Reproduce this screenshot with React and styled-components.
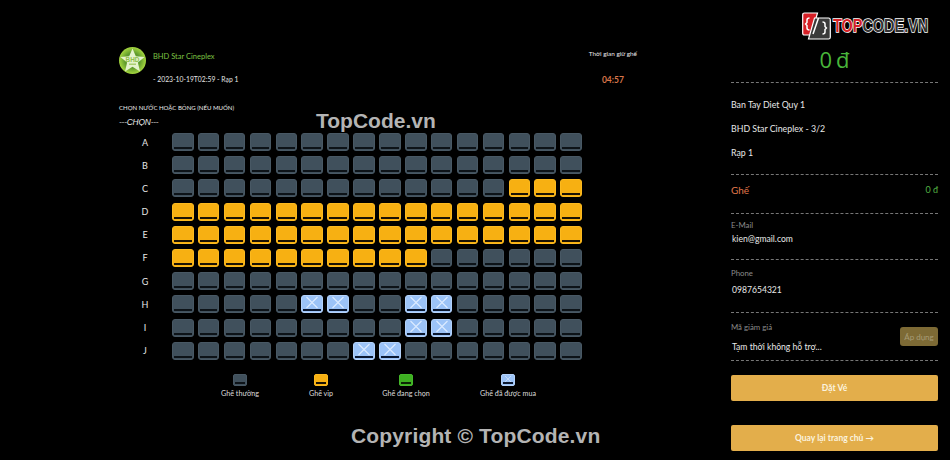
import React from "react";
import styled, { createGlobalStyle } from "styled-components";

const GlobalStyle = createGlobalStyle`
  html, body {
    margin: 0;
    padding: 0;
    background: #000;
    overflow: hidden;
  }
  body {
    font-family: "Lato", "Noto Sans", sans-serif;
    color: #e8e8e8;
  }
`;

const SEAT_COLORS = {
  normal: { bg: "#40505c", edge: "#485864", bar: "#0d1318" },
  vip: { bg: "#f7b012", edge: "#fbb91f", bar: "#1a1204" },
  picked: { bg: "#3eb022", edge: "#45b82a", bar: "#0b2605" },
  sold: { bg: "#9cc3f7", edge: "#b4d2fa", bar: "#0b1830" },
};

const Page = styled.div`
  position: relative;
  width: 950px;
  height: 460px;
  display: flex;
  background: #000;
  overflow: hidden;
`;

const Main = styled.main`
  width: 731px;
  padding: 47px 0 0 119px;
  box-sizing: border-box;
`;

const Header = styled.header`
  display: flex;
  justify-content: space-between;
  width: 518px;
  height: 53px;
`;

const Cinema = styled.div`
  display: flex;
  gap: 7px;
`;

const CinemaText = styled.div`
  display: flex;
  flex-direction: column;
  gap: 14px;
  padding-top: 5px;
`;

const CinemaName = styled.div`
  font-size: 7.5px;
  line-height: 9px;
  color: #7cc242;
`;

const CinemaInfo = styled.div`
  font-size: 6.8px;
  line-height: 9px;
  color: #e4e4e4;
`;

const Hold = styled.div`
  display: flex;
  flex-direction: column;
  align-items: center;
  gap: 17px;
  padding-top: 2px;
`;

const HoldLabel = styled.div`
  font-size: 6.4px;
  line-height: 9px;
  color: #ececec;
`;

const Countdown = styled.div`
  font-size: 8.5px;
  line-height: 10px;
  font-weight: 700;
  color: #d9764a;
`;

const ComboLabel = styled.div`
  margin-top: 3px;
  font-size: 6.05px;
  line-height: 9px;
  color: #ececec;
`;

const ComboSelect = styled.div`
  margin-top: 5px;
  font-family: "Liberation Sans", sans-serif;
  font-size: 8.4px;
  line-height: 10px;
  font-style: italic;
  letter-spacing: -0.2px;
  color: #e8e8e8;
`;

const SeatGrid = styled.div`
  margin-top: 6px;
  display: flex;
  flex-direction: column;
  gap: 5.2px;
`;

const SeatRow = styled.div`
  display: flex;
  align-items: center;
`;

const RowLabel = styled.div`
  width: 53px;
  padding-right: 1px;
  box-sizing: border-box;
  text-align: center;
  font-size: 9px;
  color: #e6e6e6;
`;

const Seats = styled.div`
  display: flex;
  gap: 4.4px;
`;

const SeatBox = styled.div`
  position: relative;
  width: ${(p) => (p.$small ? 14 : 21.5)}px;
  height: ${(p) => (p.$small ? 12 : 18)}px;
  box-sizing: border-box;
  border-radius: ${(p) => (p.$small ? 2 : 3)}px;
  background: ${(p) => SEAT_COLORS[p.$kind].bg};
  border: 1px solid ${(p) => SEAT_COLORS[p.$kind].edge};
`;

const SeatBar = styled.span`
  position: absolute;
  left: 1px;
  right: 1px;
  bottom: 1px;
  height: ${(p) => (p.$small ? 1.5 : 2)}px;
  background: ${(p) => SEAT_COLORS[p.$kind].bar};
`;

const Cross = styled.svg`
  position: absolute;
  left: 50%;
  top: 0;
  transform: translateX(-50%);
`;

const Legend = styled.div`
  margin: 14px 0 0 0;
  display: flex;
  height: 30px;
`;

const LegendItem = styled.div`
  position: relative;
  width: ${(p) => p.$w}px;
  margin-left: ${(p) => p.$ml}px;
  display: flex;
  flex-direction: column;
  align-items: center;
  gap: 3px;
`;

const LegendText = styled.div`
  font-size: 7.2px;
  line-height: 10px;
  white-space: nowrap;
  color: #dcdcdc;
`;

const Aside = styled.aside`
  width: 207px;
  display: flex;
  flex-direction: column;
`;

const Total = styled.div`
  height: 83px;
  box-sizing: border-box;
  padding-top: 45px;
  text-align: center;
  font-size: 22px;
  line-height: 28px;
  word-spacing: -2px;
  color: #48b53a;
  border-bottom: 1px dashed #777;
  font-family: "Open Sans", sans-serif;
  font-weight: 400;
`;

const Section = styled.section`
  height: ${(p) => p.$h}px;
  box-sizing: border-box;
  border-bottom: 1px dashed #777;
  position: relative;
`;

const MovieLines = styled.div`
  padding-top: 16px;
  display: flex;
  flex-direction: column;
  gap: 13px;
`;

const MovieLine = styled.div`
  font-size: 8.8px;
  line-height: 11px;
  color: #e8e8e8;
`;

const SeatSummary = styled.div`
  display: flex;
  justify-content: space-between;
  padding-top: 8px;
`;

const SeatTitle = styled.span`
  font-size: 10px;
  line-height: 14px;
  color: #e0774a;
`;

const SeatPrice = styled.span`
  font-size: 9px;
  line-height: 14px;
  color: #52b043;
`;

const FieldLabel = styled.div`
  padding-top: ${(p) => p.$top}px;
  font-size: 7.8px;
  line-height: 10px;
  color: #8b8b8b;
`;

const FieldValue = styled.div`
  margin-top: ${(p) => p.$top}px;
  padding-left: 1px;
  font-size: 8.6px;
  line-height: 11px;
  color: #e8e8e8;
`;

const ApplyButton = styled.button`
  position: absolute;
  right: 0;
  bottom: 14px;
  width: 38px;
  height: 19px;
  padding: 0;
  border: 0;
  border-radius: 3px;
  background: #7d6a35;
  color: #a79c77;
  font: 8px "Lato", sans-serif;
`;

const Action = styled.button`
  display: block;
  width: 207px;
  height: 26px;
  margin-top: ${(p) => p.$top}px;
  padding: 0;
  border: 0;
  border-radius: 2px;
  background: #e3ae4b;
  color: #fbf3df;
  font: 700 8.5px "Lato", sans-serif;
`;

const Watermark = styled.div`
  position: absolute;
  font-family: "Liberation Sans", Arial, sans-serif;
  font-weight: 700;
  font-size: 21px;
  letter-spacing: ${(p) => p.$spacing}px;
  line-height: 24px;
  color: #b4b4b4;
  white-space: nowrap;
  left: ${(p) => p.$x}px;
  top: ${(p) => p.$y}px;
`;

const Brand = styled.div`
  position: absolute;
  left: 802px;
  top: 11px;
  display: flex;
  align-items: center;
  gap: 2px;
`;

const BrandText = styled.span`
  font-family: "Liberation Sans", sans-serif;
  font-weight: 700;
  font-size: 19px;
  line-height: 28px;
  margin-top: 1px;
  color: #333;
  -webkit-text-stroke: 1.6px #fff;
  paint-order: stroke fill;
  transform: scaleX(0.76);
  transform-origin: left center;
  white-space: nowrap;
`;

const BrandRed = styled.span`
  color: #d61f26;
`;

const rows = [
  { name: "A", vip: [], sold: [] },
  { name: "B", vip: [], sold: [] },
  { name: "C", vip: [13, 14, 15], sold: [] },
  { name: "D", vip: Array.from({ length: 16 }, (_, i) => i), sold: [] },
  { name: "E", vip: Array.from({ length: 16 }, (_, i) => i), sold: [] },
  { name: "F", vip: Array.from({ length: 10 }, (_, i) => i), sold: [] },
  { name: "G", vip: [], sold: [] },
  { name: "H", vip: [], sold: [5, 6, 9, 10] },
  { name: "I", vip: [], sold: [9, 10] },
  { name: "J", vip: [], sold: [7, 8] },
];

const legend = [
  { kind: "normal", label: "Ghế thường", w: 60, ml: 91 },
  { kind: "vip", label: "Ghế vip", w: 60, ml: 21 },
  { kind: "picked", label: "Ghế đang chọn", w: 70, ml: 20 },
  { kind: "sold", label: "Ghế đã được mua", w: 80, ml: 27 },
];

const Seat = ({ kind, small }) => (
  <SeatBox $kind={kind} $small={small}>
    {kind === "sold" && (
      <Cross
        width={small ? 8 : 14}
        height={small ? 8 : 13}
        viewBox="0 0 14 13"
      >
        <path d="M1.5 1 L12.5 12 M12.5 1 L1.5 12" stroke="#dcebff" strokeWidth="1.1" />
      </Cross>
    )}
    <SeatBar $kind={kind} $small={small} />
  </SeatBox>
);

const CinemaLogo = () => (
  <svg width="27" height="27" viewBox="0 0 27 27">
    <defs>
      <radialGradient id="bhd-disc">
        <stop offset="55%" stopColor="#5f9a2c" />
        <stop offset="100%" stopColor="#a5d63f" />
      </radialGradient>
    </defs>
    <circle cx="13.5" cy="13.5" r="13.5" fill="url(#bhd-disc)" />
    <path
      d="M13.5 1.5 L16.8 9.3 L25.6 10 L18.9 15.6 L21 24.4 L13.5 19.7 L6 24.4 L8.1 15.6 L1.4 10 L10.2 9.3 Z"
      fill="#e4f2cc"
    />
    <text
      x="13.5"
      y="15.2"
      textAnchor="middle"
      fontFamily="Liberation Sans, sans-serif"
      fontWeight="700"
      fontSize="6.4"
      fill="#8fc04a"
    >
      BHD
    </text>
    <rect x="10" y="16.6" width="7" height="1.2" fill="#9cc65c" />
  </svg>
);

const BrandLogo = () => (
  <svg width="29" height="28" viewBox="0 0 29 28">
    <path d="M2.5 1 H15.5 L9 23 H2.5 Q0.7 23 0.7 21.2 V2.8 Q0.7 1 2.5 1 Z" fill="#d61f26" stroke="#fff" strokeWidth="1.2" />
    <path d="M12.5 6 H26.5 Q28.3 6 28.3 7.8 V25.2 Q28.3 27 26.5 27 H6.5 Z" fill="#3a3a3a" stroke="#fff" strokeWidth="1.2" />
    <path d="M7.5 6 Q5 6 5 8 V10.5 L3.6 12 L5 13.5 V16 Q5 18 7.5 18" fill="none" stroke="#fff" strokeWidth="1.5" />
    <path d="M20.5 10 Q23 10 23 12 V14.5 L24.4 16 L23 17.5 V20 Q23 22 20.5 22" fill="none" stroke="#fff" strokeWidth="1.5" />
    <path d="M16.5 6 L11 22" stroke="#fff" strokeWidth="1.5" />
  </svg>
);

const App = () => {
  return (
    <Page>
      <GlobalStyle />
      <Main>
        <Header>
          <Cinema>
            <CinemaLogo />
            <CinemaText>
              <CinemaName>BHD Star Cineplex</CinemaName>
              <CinemaInfo>- 2023-10-19T02:59 - Rạp 1</CinemaInfo>
            </CinemaText>
          </Cinema>
          <Hold>
            <HoldLabel>Thời gian giữ ghế</HoldLabel>
            <Countdown>04:57</Countdown>
          </Hold>
        </Header>
        <ComboLabel>CHỌN NƯỚC HOẶC BỎNG (NẾU MUỐN)</ComboLabel>
        <ComboSelect>---CHỌN---</ComboSelect>
        <SeatGrid>
          {rows.map((row) => (
            <SeatRow key={row.name}>
              <RowLabel>{row.name}</RowLabel>
              <Seats>
                {Array.from({ length: 16 }, (_, i) => {
                  let kind = "normal";
                  if (row.vip.includes(i)) kind = "vip";
                  if (row.sold.includes(i)) kind = "sold";
                  return <Seat key={i} kind={kind} />;
                })}
              </Seats>
            </SeatRow>
          ))}
        </SeatGrid>
        <Legend>
          {legend.map((item) => (
            <LegendItem key={item.kind} $w={item.w} $ml={item.ml}>
              <Seat kind={item.kind} small />
              <LegendText>{item.label}</LegendText>
            </LegendItem>
          ))}
        </Legend>
      </Main>
      <Aside>
        <Total>0 đ</Total>
        <Section $h={92}>
          <MovieLines>
            <MovieLine>Ban Tay Diet Quy 1</MovieLine>
            <MovieLine>BHD Star Cineplex - 3/2</MovieLine>
            <MovieLine>Rạp 1</MovieLine>
          </MovieLines>
        </Section>
        <Section $h={39}>
          <SeatSummary>
            <SeatTitle>Ghế</SeatTitle>
            <SeatPrice>0 đ</SeatPrice>
          </SeatSummary>
        </Section>
        <Section $h={46}>
          <FieldLabel $top={6}>E-Mail</FieldLabel>
          <FieldValue $top={4}>kien@gmail.com</FieldValue>
        </Section>
        <Section $h={53}>
          <FieldLabel $top={8}>Phone</FieldLabel>
          <FieldValue $top={7}>0987654321</FieldValue>
        </Section>
        <Section $h={48}>
          <FieldLabel $top={9}>Mã giảm giá</FieldLabel>
          <FieldValue $top={10}>Tạm thời không hỗ trợ...</FieldValue>
          <ApplyButton>Áp dụng</ApplyButton>
        </Section>
        <Action $top={14}>Đặt Vé</Action>
        <Action $top={24}>Quay lại trang chủ →</Action>
      </Aside>
      <Brand>
        <BrandLogo />
        <BrandText>
          <BrandRed>TOP</BrandRed>CODE.VN
        </BrandText>
      </Brand>
      <Watermark $x={316} $y={109} $spacing={0}>TopCode.vn</Watermark>
      <Watermark $x={351} $y={424} $spacing={0.15}>Copyright © TopCode.vn</Watermark>
    </Page>
  );
};

export default App;
